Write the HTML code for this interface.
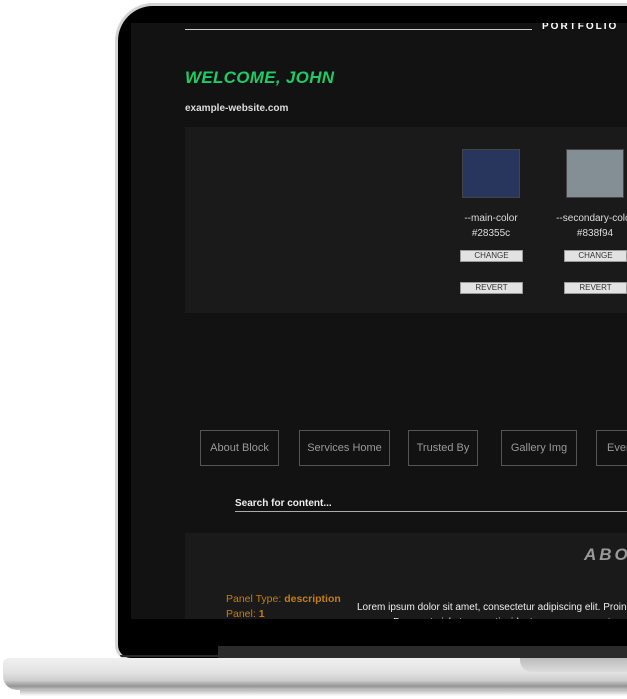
<!DOCTYPE html>
<html><head><meta charset="utf-8"><style>
*{margin:0;padding:0;box-sizing:border-box}
body{width:627px;height:699px;background:#fff;position:relative;overflow:hidden;font-family:"Liberation Sans",sans-serif}
.abs{position:absolute}
.lid{left:115px;top:3px;width:560px;height:658px;border-radius:38px 38px 0 16px;background:#d4d4d4;}
.lidin{left:118px;top:6px;width:560px;height:652px;border-radius:35px 35px 0 13px;background:#000;}
.bezline{left:120px;top:655px;width:560px;height:2px;background:#2a2a2a;border-radius:0 0 0 12px}
.screen{left:131px;top:23px;width:496px;height:596px;background:#121212;overflow:hidden}
.base{left:3px;top:658px;width:630px;height:32px;border-radius:6px 0 0 14px;background:linear-gradient(#f0f0f0 0%,#e2e2e2 45%,#cdcdcd 70%,#959595 88%,#c4c4c4 100%)}
.notch{left:520px;top:658px;width:120px;height:14px;border-radius:0 0 0 12px;background:linear-gradient(#bcbcbc,#dcdcdc)}
.hinge{left:218px;top:646px;width:420px;height:12px;background:#2b2b2b}
.shadow{left:20px;top:690px;width:610px;height:6px;background:linear-gradient(#bbb,#fff)}
.sw{width:58px;height:49px;border:1px solid #444}
.lbl{color:#ddd;font-size:10px;text-align:center;width:120px}
.btn{width:63px;height:12px;background:#e2e2e2;border:1px solid #999;color:#333;font-size:8px;text-align:center;line-height:10px}
.nav{top:430px;height:36px;border:1px solid #555;color:#999;font-size:11px;line-height:34px;text-align:center}
</style></head><body>
<div class="abs shadow"></div>
<div class="abs lid"></div>
<div class="abs lidin"></div>
<div class="abs bezline"></div>
<div class="abs hinge"></div>
<div class="abs base"></div>
<div class="abs notch"></div>
<div class="abs screen">
  <div class="abs" style="left:54px;top:6px;width:347px;height:1px;background:#ccc"></div>
  <div class="abs" style="left:411px;top:-2px;color:#fff;font-size:10px;font-weight:bold;letter-spacing:2px">PORTFOLIO</div>
  <div class="abs" style="left:54px;top:45px;color:#1ecb67;font-size:17px;font-weight:bold;font-style:italic;letter-spacing:0.3px">WELCOME, JOHN</div>
  <div class="abs" style="left:54px;top:80px;color:#ddd;font-size:10px;font-weight:bold">example-website.com</div>
  <div class="abs" style="left:54px;top:104px;width:460px;height:186px;background:#1a1a1a"></div>
  <div class="abs sw" style="left:331px;top:126px;background:#28355c"></div>
  <div class="abs sw" style="left:435px;top:126px;background:#838f94"></div>
  <div class="abs lbl" style="left:300px;top:190px">--main-color</div>
  <div class="abs lbl" style="left:300px;top:205px">#28355c</div>
  <div class="abs lbl" style="left:404px;top:190px">--secondary-color</div>
  <div class="abs lbl" style="left:404px;top:205px">#838f94</div>
  <div class="abs btn" style="left:329px;top:227px">CHANGE</div>
  <div class="abs btn" style="left:433px;top:227px">CHANGE</div>
  <div class="abs btn" style="left:329px;top:259px">REVERT</div>
  <div class="abs btn" style="left:433px;top:259px">REVERT</div>
  <div class="abs nav" style="left:69px;width:79px;top:407px">About Block</div>
  <div class="abs nav" style="left:168px;width:91px;top:407px">Services Home</div>
  <div class="abs nav" style="left:277px;width:70px;top:407px">Trusted By</div>
  <div class="abs nav" style="left:370px;width:76px;top:407px">Gallery Img</div>
  <div class="abs nav" style="left:465px;width:80px;top:407px;text-align:left;padding-left:10px">Events</div>
  <div class="abs" style="left:104px;top:475px;color:#eee;font-size:10px;font-weight:bold">Search for content...</div>
  <div class="abs" style="left:104px;top:488px;width:400px;height:1px;background:#aaa"></div>
  <div class="abs" style="left:54px;top:510px;width:460px;height:100px;background:#1a1a1a"></div>
  <div class="abs" style="left:453px;top:522px;color:#999;font-size:17px;font-weight:bold;font-style:italic;letter-spacing:3px">ABOUT</div>
  <div class="abs" style="left:95px;top:569px;color:#c47d12;font-size:10.5px;line-height:15px">Panel Type: <b>description</b><br>Panel: <b>1</b></div>
  <div class="abs" style="left:226px;top:577px;color:#eee;font-size:10px;white-space:nowrap;line-height:15px;text-align:left">Lorem ipsum dolor sit amet, consectetur adipiscing elit. Proin<br>magna. Donec ut nisl et neque tincidunt posuere a eu ante.</div>
</div>
</body></html>
